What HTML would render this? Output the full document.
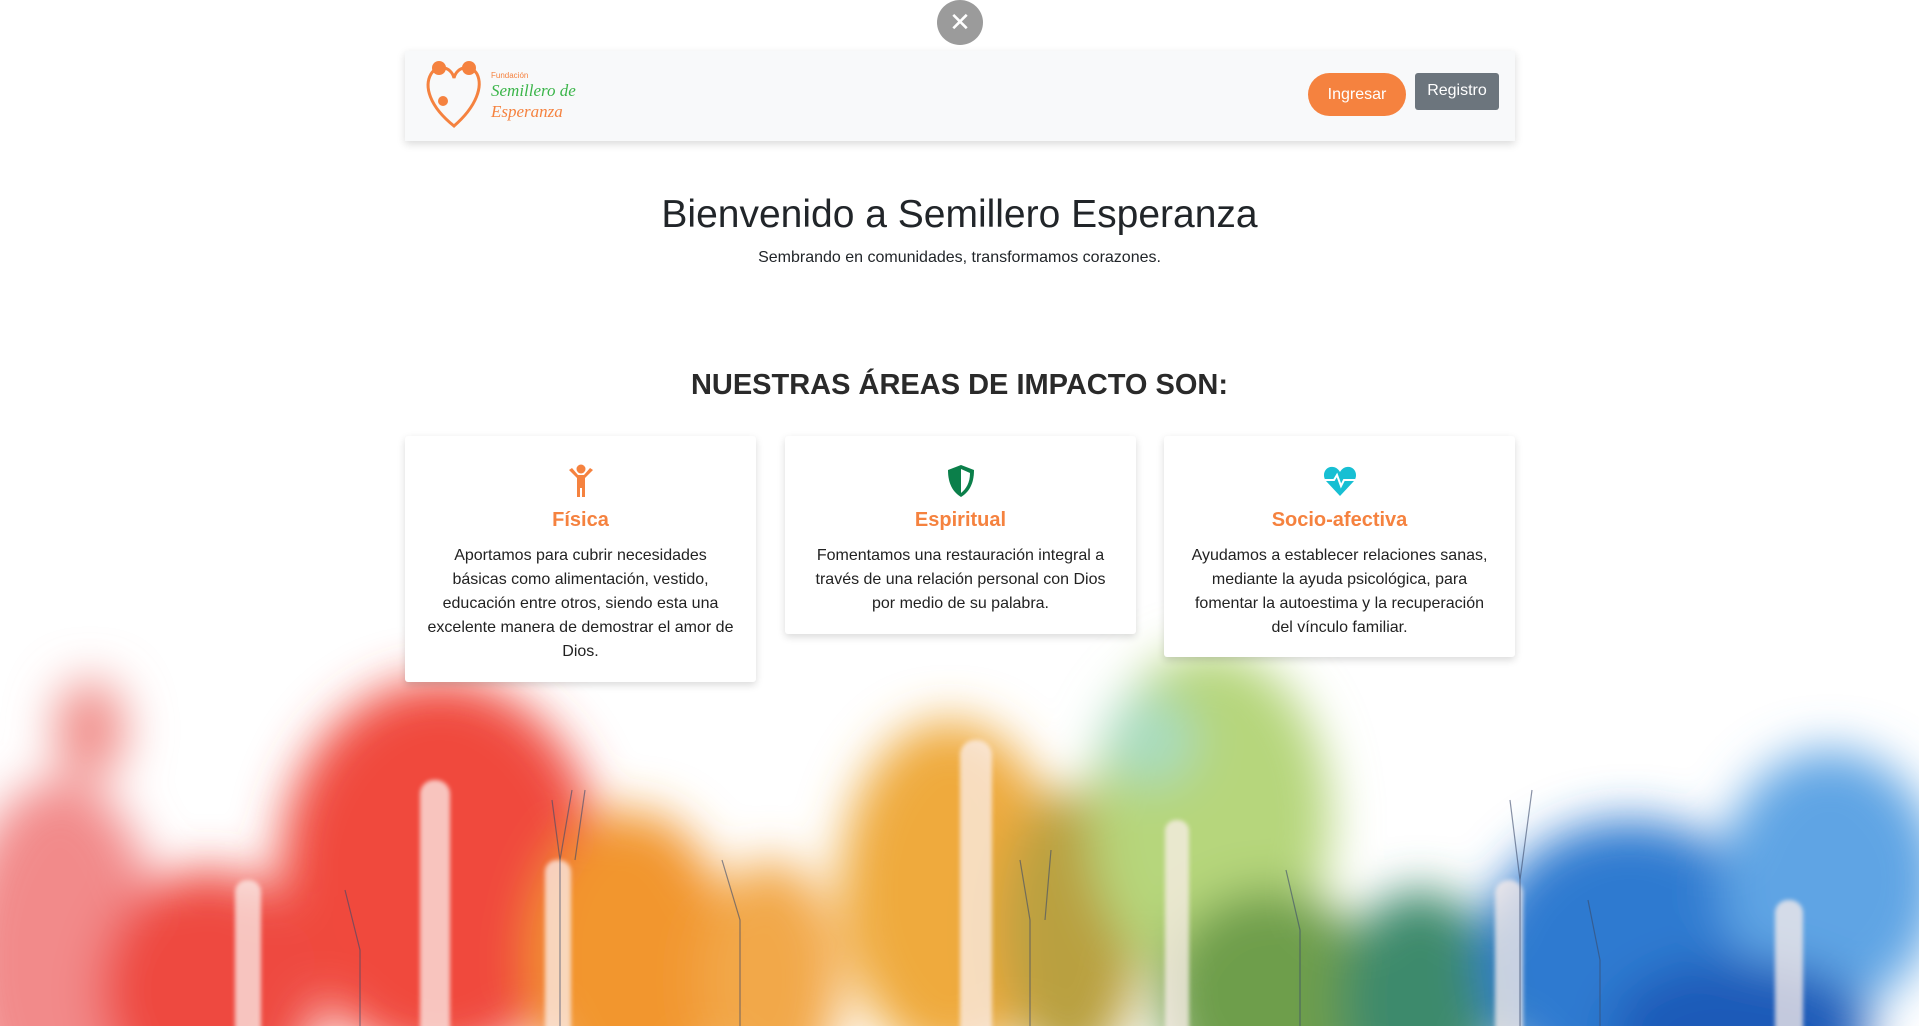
<!DOCTYPE html>
<html><head><meta charset="utf-8">
<style>
*{box-sizing:border-box;margin:0;padding:0}
html,body{width:1919px;height:1026px;overflow:hidden;background:#fff;font-family:"Liberation Sans",sans-serif;color:#212529}
#bg{position:absolute;left:0;top:0}
.close{position:absolute;left:937px;top:0;width:46px;height:45px;border-radius:50%;background:#9b9b9b;color:#fff;font-size:26px;line-height:44px;text-align:center}
.nav{position:absolute;left:405px;top:51px;width:1110px;height:90px;background:#f8f9fa;box-shadow:0 3px 8px rgba(0,0,0,.15)}
.btn1{position:absolute;left:903px;top:22px;width:98px;height:43px;border-radius:22px;background:#f5823f;color:#fff;font-size:16px;line-height:43px;text-align:center}
.btn2{position:absolute;left:1010px;top:22px;width:84px;height:37px;border-radius:3px;background:#6c757d;color:#fff;font-size:16px;line-height:35px;text-align:center}
h1{position:absolute;left:0;width:1919px;top:193px;text-align:center;font-size:39px;font-weight:500;color:#212529}
.sub{position:absolute;left:0;width:1919px;top:249px;text-align:center;font-size:16px}
h2{position:absolute;left:0;width:1919px;top:369px;text-align:center;font-size:29px;font-weight:bold;color:#2a2a2a}
.card{position:absolute;top:436px;width:351px;background:#fff;border-radius:3px;box-shadow:0 3px 8px rgba(0,0,0,.15);text-align:center;padding:28px 20px 22px}
.card h3{font-size:20px;color:#f5823f;font-weight:bold;margin-top:6px;margin-bottom:12px}
.card p{font-size:16px;line-height:24px;color:#222}
</style></head><body>
<svg id="bg" width="1919" height="1026" viewBox="0 0 1919 1026">
<defs>
<filter id="b" x="-50%" y="-50%" width="200%" height="200%"><feGaussianBlur stdDeviation="24"/></filter>
<filter id="b2"><feGaussianBlur stdDeviation="2"/></filter>
</defs>
<g filter="url(#b)">
<ellipse cx="60" cy="960" rx="100" ry="180" fill="#f28a8a"/>
<ellipse cx="90" cy="730" rx="35" ry="50" fill="#f08a86"/>
<ellipse cx="440" cy="870" rx="160" ry="190" fill="#f0483c"/>
<ellipse cx="210" cy="990" rx="110" ry="120" fill="#ee4a40"/>
<ellipse cx="630" cy="960" rx="100" ry="150" fill="#f2962e"/>
<ellipse cx="770" cy="980" rx="70" ry="120" fill="#f2a84a"/>
<ellipse cx="950" cy="890" rx="110" ry="170" fill="#efaa3c"/>
<ellipse cx="1070" cy="930" rx="70" ry="140" fill="#b9a040"/>
<ellipse cx="1210" cy="820" rx="120" ry="170" fill="#b6d67c"/>
<ellipse cx="1150" cy="740" rx="45" ry="45" fill="#a8dcc0"/>
<ellipse cx="1270" cy="1000" rx="110" ry="110" fill="#6e9e4c"/>
<ellipse cx="1420" cy="1000" rx="80" ry="110" fill="#3c8a6c"/>
<ellipse cx="1630" cy="960" rx="150" ry="140" fill="#2e7ad0"/>
<ellipse cx="1830" cy="880" rx="110" ry="130" fill="#5ea4e4"/>
<ellipse cx="1740" cy="1030" rx="130" ry="70" fill="#1a5ab8"/>
</g>
<g fill="#fbeeea" opacity=".75" filter="url(#b2)">
<rect x="420" y="780" width="30" height="290" rx="14"/>
<rect x="235" y="880" width="26" height="200" rx="12"/>
<rect x="545" y="860" width="26" height="220" rx="12"/>
<rect x="960" y="740" width="32" height="330" rx="15"/>
<rect x="1165" y="820" width="24" height="260" rx="11"/>
<rect x="1495" y="880" width="28" height="200" rx="13"/>
<rect x="1775" y="900" width="28" height="180" rx="13"/>
</g>
<g fill="none" stroke="#3a4a6a" stroke-width="1.2" opacity=".6">
<path d="M560 1026 V860 l-8-60 M560 860 l12-70 M575 860 l10-70"/>
<path d="M360 1026 V950 l-15-60"/>
<path d="M740 1026 V920 l-18-60"/>
<path d="M1030 1026 V920 l-10-60 M1045 920 l6-70"/>
<path d="M1520 1026 V880 l-10-80 M1520 880 l12-90"/>
<path d="M1300 1026 V930 l-14-60"/>
<path d="M1600 1026 V960 l-12-60"/>
</g>
</svg>
<div class="close">✕</div>
<div class="nav">
<svg width="160" height="80" style="position:absolute;left:14px;top:5px" viewBox="0 0 160 80">
<path d="M35 70 C10 50 5 30 12 18 C18 8 32 10 35 22 C38 10 52 8 58 18 C64 30 58 50 35 70Z" fill="none" stroke="#f5823f" stroke-width="3"/>
<circle cx="20" cy="12" r="7" fill="#f5823f"/><circle cx="50" cy="12" r="7" fill="#f5823f"/>
<circle cx="24" cy="45" r="5" fill="#f5823f"/>
<text x="72" y="22" font-size="8" fill="#f5823f" font-family="Liberation Sans">Fundación</text>
<text x="72" y="40" font-size="17" fill="#3bb54a" font-style="italic" font-family="Liberation Serif">Semillero de</text>
<text x="72" y="61" font-size="17" fill="#f5823f" font-style="italic" font-family="Liberation Serif">Esperanza</text>
</svg>
<div class="btn1">Ingresar</div>
<div class="btn2">Registro</div>
</div>
<h1>Bienvenido a Semillero Esperanza</h1>
<div class="sub">Sembrando en comunidades, transformamos corazones.</div>
<h2>NUESTRAS ÁREAS DE IMPACTO SON:</h2>
<div class="card" style="left:405px;height:246px">
<svg width="30" height="34" viewBox="0 0 30 34"><circle cx="15" cy="5" r="4.5" fill="#f5823f"/><path d="M3 6 L11 14 V33 H14 V24 H16 V33 H19 V14 L27 6 L24 4 L18 11 H12 L6 4Z" fill="#f5823f"/></svg>
<h3>Física</h3>
<p>Aportamos para cubrir necesidades básicas como alimentación, vestido, educación entre otros, siendo esta una excelente manera de demostrar el amor de Dios.</p>
</div>
<div class="card" style="left:785px;height:198px">
<svg width="30" height="34" viewBox="0 0 30 34"><path d="M15 1 L28 6 C28 20 23 28 15 33 C7 28 2 20 2 6Z" fill="#0b7f4a"/><path d="M15 5 L24 9 C24 19 20 25 15 29Z" fill="#fff"/></svg>
<h3>Espiritual</h3>
<p>Fomentamos una restauración integral a través de una relación personal con Dios por medio de su palabra.</p>
</div>
<div class="card" style="left:1164px;height:221px">
<svg width="34" height="34" viewBox="0 0 34 34"><path d="M17 32 L3 17 C-2 10 3 2 10 3 C13 3 16 6 17 8 C18 6 21 3 24 3 C31 2 36 10 31 17Z" fill="#17bfd3"/><path d="M2 16 H11 L14 11 L18 22 L21 16 H32" fill="none" stroke="#fff" stroke-width="2"/></svg>
<h3>Socio-afectiva</h3>
<p>Ayudamos a establecer relaciones sanas, mediante la ayuda psicológica, para fomentar la autoestima y la recuperación del vínculo familiar.</p>
</div>
</body></html>
